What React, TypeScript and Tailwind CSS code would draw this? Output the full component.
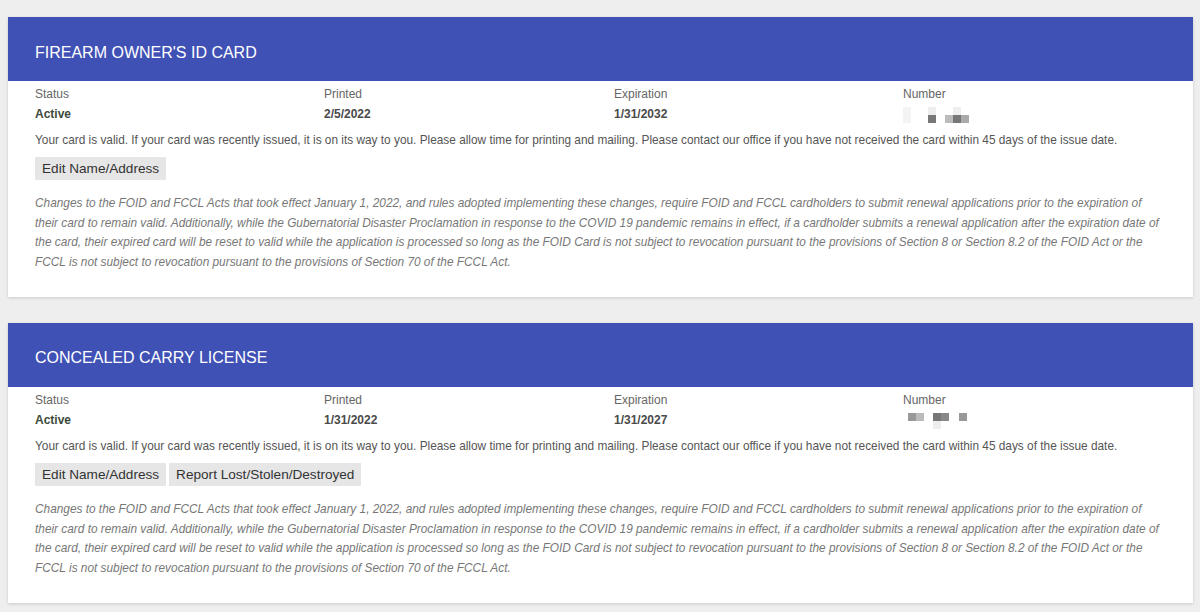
const notice =
  "Changes to the FOID and FCCL Acts that took effect January 1, 2022, and rules adopted implementing these changes, require FOID and FCCL cardholders to submit renewal applications prior to the expiration of their card to remain valid. Additionally, while the Gubernatorial Disaster Proclamation in response to the COVID 19 pandemic remains in effect, if a cardholder submits a renewal application after the expiration date of the card, their expired card will be reset to valid while the application is processed so long as the FOID Card is not subject to revocation pursuant to the provisions of Section 8 or Section 8.2 of the FOID Act or the FCCL is not subject to revocation pursuant to the provisions of Section 70 of the FCCL Act.";

type Card = {
  title: string;
  printed: string;
  expiration: string;
  buttons: string[];
  blur: { x: number; y: number; w: number; h: number; c: string }[];
};

const cards: Card[] = [
  {
    title: "FIREARM OWNER'S ID CARD",
    printed: "2/5/2022",
    expiration: "1/31/2032",
    buttons: ["Edit Name/Address"],
    blur: [
      { x: 0, y: 0, w: 8, h: 16, c: "#f4f4f4" },
      { x: 25, y: 0, w: 8, h: 8, c: "#eeeeee" },
      { x: 25, y: 8, w: 8, h: 8, c: "#777777" },
      { x: 42, y: 8, w: 8, h: 8, c: "#bbbbbb" },
      { x: 50, y: 0, w: 8, h: 8, c: "#eeeeee" },
      { x: 50, y: 8, w: 8, h: 8, c: "#777777" },
      { x: 58, y: 8, w: 8, h: 8, c: "#aaaaaa" },
    ],
  },
  {
    title: "CONCEALED CARRY LICENSE",
    printed: "1/31/2022",
    expiration: "1/31/2027",
    buttons: ["Edit Name/Address", "Report Lost/Stolen/Destroyed"],
    blur: [
      { x: 5, y: 0, w: 8, h: 8, c: "#999999" },
      { x: 13, y: 0, w: 8, h: 8, c: "#bbbbbb" },
      { x: 30, y: 0, w: 8, h: 8, c: "#777777" },
      { x: 38, y: 0, w: 8, h: 8, c: "#888888" },
      { x: 30, y: 8, w: 8, h: 8, c: "#eeeeee" },
      { x: 56, y: 0, w: 8, h: 8, c: "#999999" },
    ],
  },
];

function Field({ label, value, green }: { label: string; value: React.ReactNode; green?: boolean }) {
  return (
    <div>
      <p className="text-[12px] leading-[20px] text-[#666]">{label}</p>
      <div className={`text-[12px] font-bold leading-[20px] ${green ? "text-[#3b4a3b]" : "text-[#4a4a4a]"}`}>
        {value}
      </div>
    </div>
  );
}

function CardPanel({ card }: { card: Card }) {
  return (
    <section className="bg-white shadow-[0_1px_3px_rgba(0,0,0,0.15)]">
      <header className="flex h-[64px] items-center bg-[#3f51b5] pl-[27px] pt-[7px] text-[16px] text-white">
        {card.title}
      </header>
      <div className="pb-[24px] pl-[27px] pr-[30px] pt-[3px]">
        <div className="grid grid-cols-[289px_290px_289px_1fr]">
          <Field label="Status" value="Active" green />
          <Field label="Printed" value={card.printed} />
          <Field label="Expiration" value={card.expiration} />
          <Field
            label="Number"
            value={
              <div className="relative h-[20px]">
                {card.blur.map((b, i) => (
                  <span
                    key={i}
                    className="absolute"
                    style={{ left: b.x, top: b.y + 3, width: b.w, height: b.h, background: b.c }}
                  />
                ))}
              </div>
            }
          />
        </div>
        <p className="mt-[6px] text-[11.85px] leading-[20px] text-[#555]">
          Your card is valid. If your card was recently issued, it is on its way to you. Please allow time for printing and mailing. Please contact our office if you have not received the card within 45 days of the issue date.
        </p>
        <div className="mt-[7px] flex gap-[3px]">
          {card.buttons.map((b) => (
            <span key={b} className="bg-[#e6e6e6] px-[7px] text-[13.6px] leading-[23px] text-[#333]">
              {b}
            </span>
          ))}
        </div>
        <p className="mt-[14px] text-[11.85px] italic leading-[19.7px] text-[#777]">{notice}</p>
      </div>
    </section>
  );
}

export default function App() {
  return (
    <div
      className="min-h-[612px] bg-[#eeeeee] pb-[10px] pl-[8px] pr-[7px] pt-[17px]"
      style={{ fontFamily: '"Liberation Sans", Arial, sans-serif' }}
    >
      <div className="flex flex-col gap-[26px]">
        {cards.map((c) => (
          <CardPanel key={c.title} card={c} />
        ))}
      </div>
    </div>
  );
}
